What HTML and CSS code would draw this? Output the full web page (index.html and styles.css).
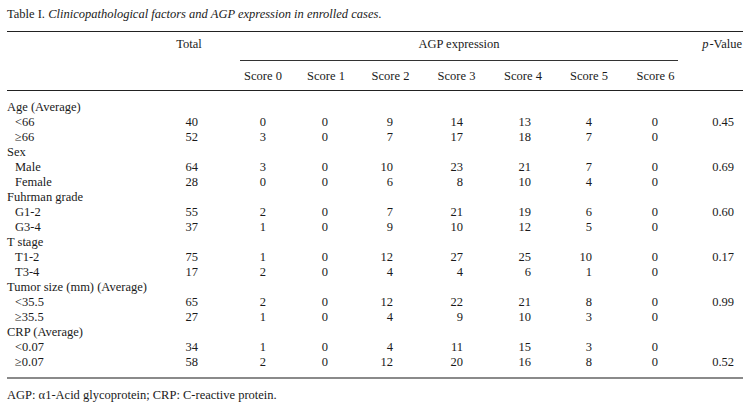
FILE: index.html
```html
<!DOCTYPE html>
<html>
<head>
<meta charset="utf-8">
<title>Table I</title>
<link rel="stylesheet" href="styles.css">
</head>
<body>
<div class="page">
  <p class="caption">Table I. <i>Clinicopathological factors and AGP expression in enrolled cases</i>.</p>
  <table class="data">
    <colgroup>
      <col class="c-label"><col class="c-total">
      <col class="c-s0"><col class="c-s1"><col class="c-s2"><col class="c-s3"><col class="c-s4"><col class="c-s5"><col class="c-s6">
      <col class="c-p">
    </colgroup>
    <thead>
      <tr class="h1">
        <th></th>
        <th class="ctr">Total</th>
        <th colspan="7" class="group"><div class="group-inner">AGP expression</div></th>
        <th class="pv"><i>p</i>-Value</th>
      </tr>
      <tr class="h2">
        <th></th><th></th>
        <th class="ctr">Score 0</th><th class="ctr">Score 1</th><th class="ctr">Score 2</th><th class="ctr">Score 3</th><th class="ctr">Score 4</th><th class="ctr">Score 5</th><th class="ctr">Score 6</th>
        <th></th>
      </tr>
    </thead>
    <tbody>
      <tr class="first"><td class="cat" colspan="10">Age (Average)</td></tr>
      <tr><td class="sub">&lt;66</td><td class="tot">40</td><td class="n">0</td><td class="n">0</td><td class="n">9</td><td class="n">14</td><td class="n">13</td><td class="n">4</td><td class="n">0</td><td class="p">0.45</td></tr>
      <tr><td class="sub">≥66</td><td class="tot">52</td><td class="n">3</td><td class="n">0</td><td class="n">7</td><td class="n">17</td><td class="n">18</td><td class="n">7</td><td class="n">0</td><td class="p"></td></tr>
      <tr><td class="cat" colspan="10">Sex</td></tr>
      <tr><td class="sub">Male</td><td class="tot">64</td><td class="n">3</td><td class="n">0</td><td class="n">10</td><td class="n">23</td><td class="n">21</td><td class="n">7</td><td class="n">0</td><td class="p">0.69</td></tr>
      <tr><td class="sub">Female</td><td class="tot">28</td><td class="n">0</td><td class="n">0</td><td class="n">6</td><td class="n">8</td><td class="n">10</td><td class="n">4</td><td class="n">0</td><td class="p"></td></tr>
      <tr><td class="cat" colspan="10">Fuhrman grade</td></tr>
      <tr><td class="sub">G1-2</td><td class="tot">55</td><td class="n">2</td><td class="n">0</td><td class="n">7</td><td class="n">21</td><td class="n">19</td><td class="n">6</td><td class="n">0</td><td class="p">0.60</td></tr>
      <tr><td class="sub">G3-4</td><td class="tot">37</td><td class="n">1</td><td class="n">0</td><td class="n">9</td><td class="n">10</td><td class="n">12</td><td class="n">5</td><td class="n">0</td><td class="p"></td></tr>
      <tr><td class="cat" colspan="10">T stage</td></tr>
      <tr><td class="sub">T1-2</td><td class="tot">75</td><td class="n">1</td><td class="n">0</td><td class="n">12</td><td class="n">27</td><td class="n">25</td><td class="n">10</td><td class="n">0</td><td class="p">0.17</td></tr>
      <tr><td class="sub">T3-4</td><td class="tot">17</td><td class="n">2</td><td class="n">0</td><td class="n">4</td><td class="n">4</td><td class="n">6</td><td class="n">1</td><td class="n">0</td><td class="p"></td></tr>
      <tr><td class="cat" colspan="10">Tumor size (mm) (Average)</td></tr>
      <tr><td class="sub">&lt;35.5</td><td class="tot">65</td><td class="n">2</td><td class="n">0</td><td class="n">12</td><td class="n">22</td><td class="n">21</td><td class="n">8</td><td class="n">0</td><td class="p">0.99</td></tr>
      <tr><td class="sub">≥35.5</td><td class="tot">27</td><td class="n">1</td><td class="n">0</td><td class="n">4</td><td class="n">9</td><td class="n">10</td><td class="n">3</td><td class="n">0</td><td class="p"></td></tr>
      <tr><td class="cat" colspan="10">CRP (Average)</td></tr>
      <tr><td class="sub">&lt;0.07</td><td class="tot">34</td><td class="n">1</td><td class="n">0</td><td class="n">4</td><td class="n">11</td><td class="n">15</td><td class="n">3</td><td class="n">0</td><td class="p"></td></tr>
      <tr class="last"><td class="sub">≥0.07</td><td class="tot">58</td><td class="n">2</td><td class="n">0</td><td class="n">12</td><td class="n">20</td><td class="n">16</td><td class="n">8</td><td class="n">0</td><td class="p">0.52</td></tr>
    </tbody>
  </table>
  <p class="note">AGP: α1-Acid glycoprotein; CRP: C-reactive protein.</p>
</div>
</body>
</html>
```

FILE: styles.css
```css
html, body {
  margin: 0;
  padding: 0;
  background: #ffffff;
}

body {
  font-family: "Liberation Serif", "Times New Roman", serif;
  font-size: 12.5px;
  line-height: 15px;
  color: #1a1a1a;
}

.page {
  padding: 7px 9px 0 7px;
}

.caption {
  margin: 0 0 9px 0;
  line-height: 15px;
}

.caption i {
  font-style: italic;
}

.data {
  width: 736px;
  table-layout: fixed;
  border-collapse: separate;
  border-spacing: 0;
}

.c-label { width: 139px; }
.c-total { width: 86px; }
.c-s0 { width: 62px; }
.c-s1 { width: 64px; }
.c-s2 { width: 65px; }
.c-s3 { width: 67px; }
.c-s4 { width: 66px; }
.c-s5 { width: 66px; }
.c-s6 { width: 67px; }
.c-p { width: 54px; }

th, td {
  padding: 0;
  font-weight: normal;
  line-height: 15px;
  vertical-align: top;
  white-space: nowrap;
}

.h1 th {
  border-top: 1px solid #222;
  padding-top: 5px;
}

.h1 th.group {
  padding-top: 0;
}

.group-inner {
  box-sizing: border-box;
  height: 29px;
  padding-top: 5px;
  margin: 0 11px 0 8px;
  border-bottom: 1px solid #333;
  text-align: center;
}

.h2 th {
  padding-top: 8px;
  padding-bottom: 6px;
  border-bottom: 1px solid #222;
}

.ctr {
  text-align: center;
}

.pv {
  text-align: right;
  padding-right: 1px;
}

.pv i {
  margin-right: 1px;
}

.first td {
  padding-top: 9px;
}

.last td {
  padding-bottom: 7px;
  border-bottom: 2px solid #8a8a8a;
}

.cat {
  text-align: left;
}

.sub {
  padding-left: 8px;
  text-align: left;
}

.tot {
  text-align: right;
  padding-right: 34px;
}

.n {
  text-align: right;
  padding-right: 30px;
}

/* per-column right insets for the score figures */
td.n:nth-child(3) { padding-right: 28px; }
td.n:nth-child(4) { padding-right: 30px; }
td.n:nth-child(5) { padding-right: 30px; }
td.n:nth-child(6) { padding-right: 27px; }
td.n:nth-child(7) { padding-right: 25px; }
td.n:nth-child(8) { padding-right: 30px; }
td.n:nth-child(9) { padding-right: 31px; }

.p {
  text-align: right;
  padding-right: 9px;
}

.note {
  margin: 9px 0 0 0;
  line-height: 15px;
}
```
